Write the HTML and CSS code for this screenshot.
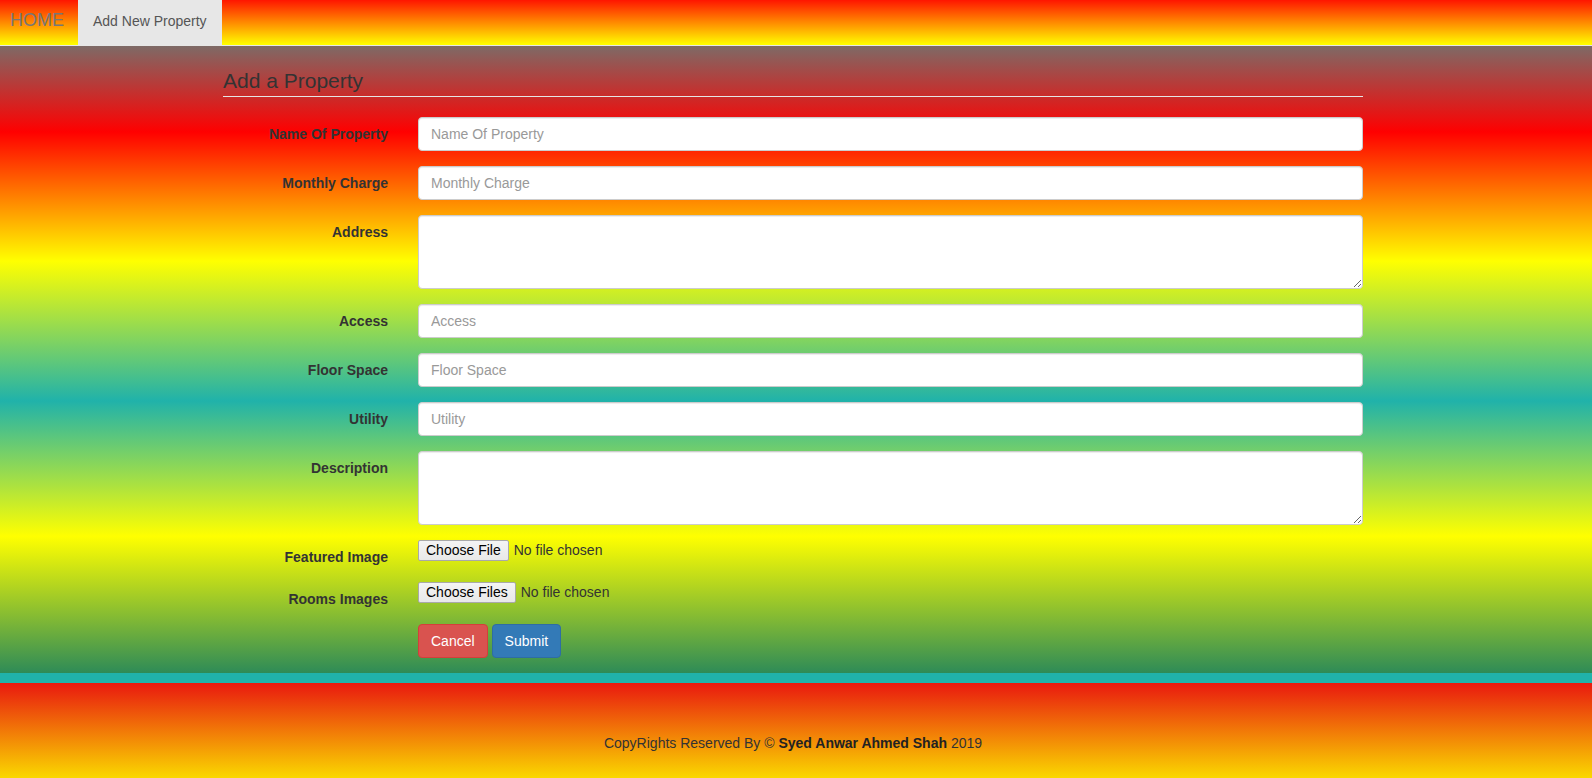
FILE: index.html
```html
<!DOCTYPE html>
<html lang="en">
<head>
<meta charset="utf-8">
<title>Add a Property</title>
<link rel="stylesheet" href="styles.css">
</head>
<body>
<nav class="navbar">
  <a class="brand" href="#">HOME</a>
  <a class="nav-tab active" href="#">Add New Property</a>
</nav>

<main class="main">
  <div class="shift">
    <div class="container">
      <form class="form">
        <div class="legend">Add a Property</div>

        <div class="group">
          <label class="label">Name Of Property</label>
          <div class="field"><input class="control" type="text" placeholder="Name Of Property"></div>
        </div>
        <div class="group">
          <label class="label">Monthly Charge</label>
          <div class="field"><input class="control" type="text" placeholder="Monthly Charge"></div>
        </div>
        <div class="group">
          <label class="label">Address</label>
          <div class="field"><textarea class="control area" rows="3"></textarea></div>
        </div>
        <div class="group">
          <label class="label">Access</label>
          <div class="field"><input class="control" type="text" placeholder="Access"></div>
        </div>
        <div class="group">
          <label class="label">Floor Space</label>
          <div class="field"><input class="control" type="text" placeholder="Floor Space"></div>
        </div>
        <div class="group">
          <label class="label">Utility</label>
          <div class="field"><input class="control" type="text" placeholder="Utility"></div>
        </div>
        <div class="group">
          <label class="label">Description</label>
          <div class="field"><textarea class="control area" rows="3"></textarea></div>
        </div>
        <div class="group">
          <label class="label">Featured Image</label>
          <div class="field"><input class="file" type="file"></div>
        </div>
        <div class="group">
          <label class="label">Rooms Images</label>
          <div class="field"><input class="file" type="file" multiple></div>
        </div>
        <div class="group">
          <div class="label"></div>
          <div class="field buttons">
            <button class="btn btn-danger" type="button">Cancel</button>
            <button class="btn btn-primary" type="button">Submit</button>
          </div>
        </div>
      </form>
    </div>
  </div>
</main>

<footer class="footer">
  <div class="shift">
    <div class="container footer-text">CopyRights Reserved By &copy; <b>Syed Anwar Ahmed Shah</b> 2019</div>
  </div>
</footer>
</body>
</html>
```

FILE: styles.css
```css
* {
  box-sizing: border-box;
}

html, body {
  margin: 0;
  padding: 0;
}

body {
  font-family: "Liberation Sans", Arial, Helvetica, sans-serif;
  font-size: 14px;
  line-height: 20px;
  color: #333;
  background: #20b2aa;
}

/* ---------- navbar ---------- */
.navbar {
  display: flex;
  height: 46px;
  background: linear-gradient(to bottom, #ff1500, #ffff00);
  border-bottom: 1px solid #e7e7e7;
}

.brand {
  display: block;
  padding: 10px 14px 15px 10px;
  font-size: 18px;
  line-height: 20px;
  color: #777;
  text-decoration: none;
}

.nav-tab {
  display: block;
  padding: 11px 15px 14px;
  font-size: 14px;
  line-height: 20px;
  color: #555;
  text-decoration: none;
}

.nav-tab.active {
  background: #e7e7e7;
}

/* ---------- main ---------- */
.main {
  padding-top: 20px;
  background: linear-gradient(to bottom,
    rgb(126, 106, 102) 0%,
    #ff0000 13.7%,
    #ffff00 34.3%,
    #20b2aa 56.6%,
    #ffff00 78.2%,
    #2e8b57 100%);
}

.shift {
  padding-right: 6px;
}

.container {
  width: 1170px;
  margin: 0 auto;
  padding: 0 15px;
}

.form {
  display: flow-root;
  margin: 0;
}

.legend {
  font-size: 21px;
  line-height: 30px;
  color: #333;
  border-bottom: 1px solid #e5e5e5;
  margin-bottom: 20px;
}

.group {
  display: flex;
  margin: 0 -15px 15px;
}

.label {
  width: 195px;
  flex: none;
  padding: 7px 15px 0;
  text-align: right;
  font-weight: bold;
  line-height: 20px;
  color: #333;
}

.field {
  flex: 1;
  padding: 0 15px;
}

.control {
  display: block;
  width: 100%;
  height: 34px;
  padding: 6px 12px;
  font-family: inherit;
  font-size: 14px;
  line-height: 20px;
  color: #555;
  background: #fff;
  border: 1px solid #ccc;
  border-radius: 4px;
  box-shadow: inset 0 1px 1px rgba(0, 0, 0, 0.075);
  margin: 0;
}

.control::placeholder {
  color: #999;
}

.area {
  height: 74px;
  resize: vertical;
}

.file {
  display: block;
  font-family: inherit;
  font-size: 14px;
  line-height: 21px;
  height: 21px;
  color: #333;
  margin: 0;
  padding: 0;
}

.file::file-selector-button {
  font-family: "Liberation Sans", Arial, sans-serif;
  font-size: 14px;
  line-height: 17px;
  height: 21px;
  padding: 1px 7px;
  margin: 0 5px 0 0;
  color: #000;
  background: linear-gradient(to bottom, #f4f4f4, #e8e8e8);
  border: 1px solid #a9a9a9;
  border-radius: 2px;
}

.buttons {
  display: flex;
  gap: 4px;
}

.btn {
  display: inline-block;
  padding: 6px 12px;
  font-family: inherit;
  font-size: 14px;
  line-height: 20px;
  border: 1px solid transparent;
  border-radius: 4px;
  color: #fff;
  margin: 0;
  cursor: pointer;
}

.btn-danger {
  background: #d9534f;
  border-color: #d43f3a;
}

.btn-primary {
  background: #337ab7;
  border-color: #2e6da4;
}

/* ---------- footer ---------- */
.footer {
  border-top: 10px solid #20b2aa;
  height: 105px;
  padding-top: 50px;
  background: linear-gradient(to bottom, #e9190f, #fad800);
}

.footer-text {
  text-align: center;
  line-height: 20px;
  color: #333;
}

.footer-text b {
  color: #222;
}
```
